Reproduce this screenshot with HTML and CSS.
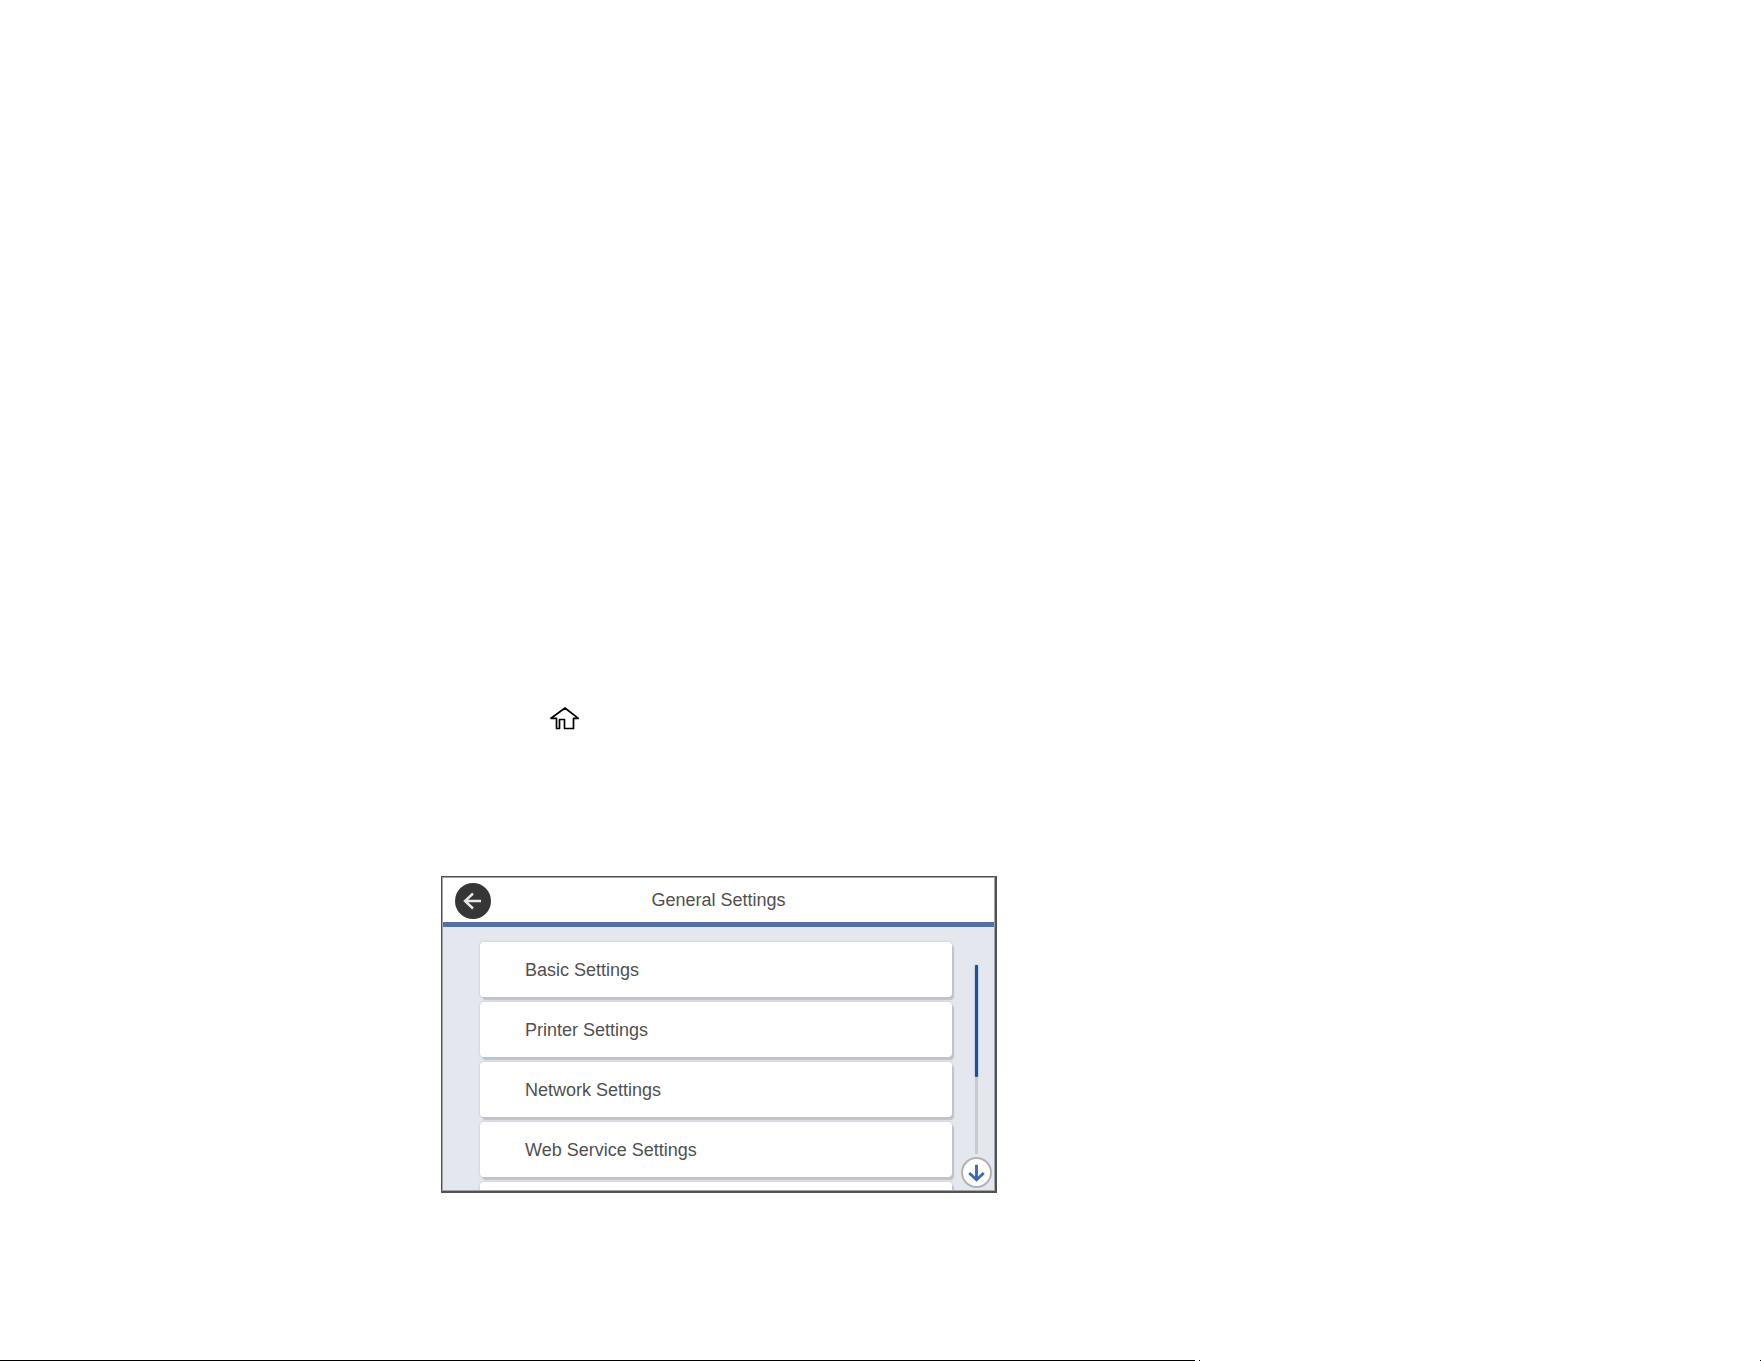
FILE: index.html
```
<!DOCTYPE html>
<html lang="en">
<head>
    <meta charset="UTF-8">
    <meta name="viewport" content="width=device-width, initial-scale=1.0">
    <title>General Settings</title>
    <link rel="stylesheet" href="styles.css">
</head>
<body>
    <main class="content">
        <svg class="home-icon" viewBox="0 0 30 24" role="img" aria-label="Home">
            <path d="M15 2 L28.3 12.3 H23.5 V22.5 H14.5 V13.5 H9.5 V22.5 H6.5 V12.3 H1 Z"/>
        </svg>

        <section class="panel">
            <header class="panel-header">
                <button class="back" type="button" aria-label="Back">
                    <svg viewBox="0 0 36 36">
                        <path d="M26 18 H10 M18 10.5 L10 18 L18 25.5"/>
                    </svg>
                </button>
                <h1>General Settings</h1>
            </header>

            <div class="panel-body">
                <div class="menu">
                    <button class="item" type="button">Basic Settings</button>
                    <button class="item" type="button">Printer Settings</button>
                    <button class="item" type="button">Network Settings</button>
                    <button class="item" type="button">Web Service Settings</button>
                    <!-- next item, cut off until scrolled -->
                    <button class="item" type="button" aria-label="More"></button>
                </div>
                <div class="scroll">
                    <div class="thumb"></div>
                    <div class="track"></div>
                    <button class="down" type="button" aria-label="Scroll down">
                        <svg viewBox="0 0 32 32">
                            <path d="M16 8 V23 M8.5 16.5 L16 23.5 L23.5 16.5"/>
                        </svg>
                    </button>
                </div>
            </div>
        </section>
    </main>

    <footer class="page-end">
        <span class="rule"></span>
        <span class="dot"></span>
        <span class="dot last"></span>
    </footer>
</body>
</html>
```

FILE: styles.css
```
* {
    box-sizing: border-box;
}
body {
    display: flex;
    flex-direction: column;
    min-height: 100vh;
    margin: 0;
    background: #fff;
    color: #505050;
    font-family: "Liberation Sans", Arial, sans-serif;
    font-size: 18px;
}
button {
    font: inherit;
    color: inherit;
    border: none;
    padding: 0;
}
svg {
    display: block;
    fill: none;
}
.content {
    flex: 1;
    padding: 706px 20px 20px 441px;
}
.home-icon {
    width: 30px;
    height: 24px;
    margin: 0 0 146px 109px;
    stroke: #000;
    stroke-width: 1.7;
    stroke-linejoin: round;
}
.panel {
    max-width: 556px;
    padding: 1px;
    border: 1px solid #505252;
    border-right-width: 2px;
    border-bottom-width: 2px;
    background: #a2a5a8;
}
.panel-header {
    display: grid;
    grid-template-columns: 36px 1fr 36px;
    align-items: center;
    height: 49px;
    padding: 1px 12px 0;
    background: #fff;
    border-bottom: 5px solid #5470a2;
}
.panel-header h1 {
    margin: 0;
    font-size: 18px;
    font-weight: normal;
    text-align: center;
}
.back {
    width: 36px;
    height: 36px;
    border-radius: 50%;
    background: #363636;
}
.back svg {
    stroke: #e8e8e8;
    stroke-width: 2.4;
}
.panel-body {
    display: flex;
    gap: 9px;
    height: 263px;
    padding: 0 2px 0 37px;
    background: #e4e8ee;
    overflow: hidden;
}
.menu {
    flex: 1;
    display: flex;
    flex-direction: column;
    gap: 5px;
    padding-top: 15px;
}
.item {
    flex: none;
    height: 55px;
    padding: 2px 0 0 45px;
    border-radius: 4px;
    background: #fff;
    box-shadow: 2px 3px 1px #bfc3c8, 0 0 2px 1px #d2d6dc;
    text-align: left;
}
.scroll {
    display: flex;
    flex-direction: column;
    align-items: center;
    width: 31px;
    padding: 38px 0 2px;
}
.thumb {
    width: 3px;
    height: 112px;
    border-radius: 1px;
    background: #1f4f96;
    box-shadow: 0 0 1px 1px #c5d2e4;
}
.track {
    flex: 1;
    width: 3px;
    margin-bottom: 3px;
    background: #c8cacd;
}
.down {
    width: 31px;
    height: 31px;
    border: 2px solid #b2b2b2;
    border-radius: 50%;
    background: #fff;
}
.down svg {
    margin: -2px;
    stroke: #4268b0;
    stroke-width: 3;
}
.page-end {
    display: flex;
    gap: 4px;
    height: 1px;
}
.rule {
    width: 1195px;
    background: #000;
}
.dot {
    width: 1px;
    background: #000;
}
.last {
    margin-left: auto;
}
```
